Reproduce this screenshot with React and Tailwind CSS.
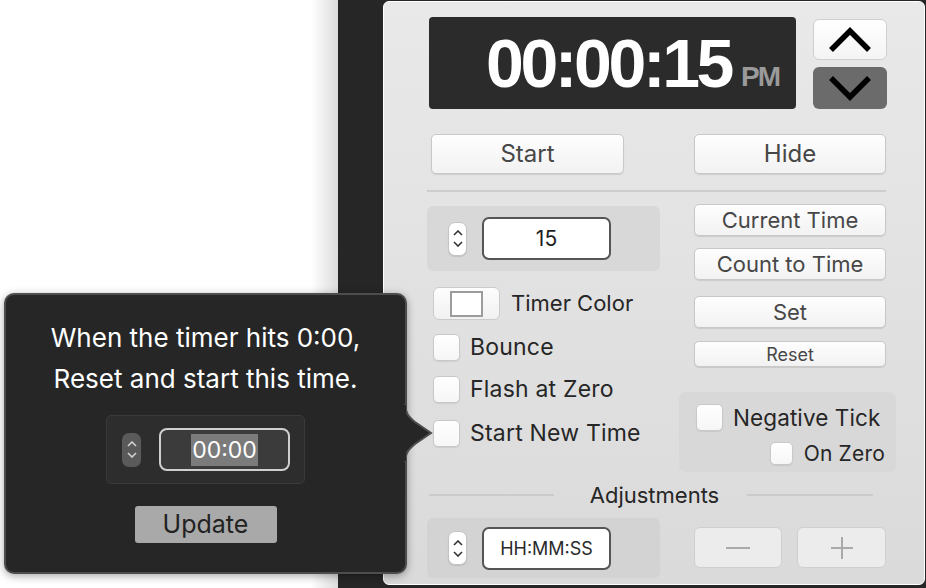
import React from "react";

const font = { fontFamily: "Inter, 'Noto Sans', sans-serif" };

function Btn({ className = "", children }) {
  return (
    <div
      className={`flex items-center justify-center rounded-[5px] border border-[#c8c8c8] bg-gradient-to-b from-[#fefefe] to-[#f2f2f2] text-[#474747] shadow-[0_1px_1px_rgba(0,0,0,0.10)] ${className}`}
    >
      {children}
    </div>
  );
}

function Check({ className = "" }) {
  return (
    <div
      className={`shrink-0 rounded-[5px] border border-[#c9c9c9] bg-gradient-to-b from-white to-[#f6f6f6] shadow-[0_1px_1px_rgba(0,0,0,0.08)] ${className}`}
    />
  );
}

function Stepper({ dark = false }) {
  const stroke = dark ? "#d0d0d0" : "#333";
  return (
    <div
      className={
        dark
          ? "flex h-[34px] w-[19px] flex-col items-center justify-center gap-[5px] rounded-[7px] bg-[#5a5a5a]"
          : "flex h-[34px] w-[19px] flex-col items-center justify-center gap-[5px] rounded-[7px] border border-[#c4c4c4] bg-white shadow-[0_1px_1px_rgba(0,0,0,0.1)]"
      }
    >
      <svg width="10" height="6" viewBox="0 0 10 6">
        <path d="M1 5 L5 1 L9 5" fill="none" stroke={stroke} strokeWidth="1.6" />
      </svg>
      <svg width="10" height="6" viewBox="0 0 10 6">
        <path d="M1 1 L5 5 L9 1" fill="none" stroke={stroke} strokeWidth="1.6" />
      </svg>
    </div>
  );
}

export default function App() {
  return (
    <div className="relative flex h-[588px] w-[926px] overflow-hidden bg-white" style={font}>
      {/* left desktop area */}
      <div className="h-full w-[338px] bg-gradient-to-r from-white from-[92%] to-[#dcdcdc]" />
      {/* dark window */}
      <div className="flex h-full flex-1 bg-[#262626] pb-[3px] pl-[45px] pr-[1px] pt-[1px]">
        <div className="flex h-full w-full flex-col rounded-[6px] border border-white bg-gradient-to-b from-[#e9e9e9] to-[#dadada] pl-[43px] pt-[15px]">
          {/* Row 1: display + arrows */}
          <div className="flex">
            <div className="ml-[2px] flex h-[92px] w-[367px] items-end justify-end rounded-[4px] bg-[#2b2b2b] pb-[12px] pr-[17px]">
              <span
                className="text-[68px] font-bold leading-none tracking-[-3.4px] text-white"
                style={{ fontFamily: "'Liberation Sans', Arial, sans-serif" }}
              >
                00:00:15
              </span>
              <span
                className="mb-[6px] ml-[10px] text-[28px] font-bold leading-none tracking-[-2px] text-[#9a9a9a]"
                style={{ fontFamily: "'Liberation Sans', Arial, sans-serif" }}
              >
                PM
              </span>
            </div>
            <div className="ml-[17px] flex flex-col gap-[7px] pt-[2px]">
              <div className="flex h-[41px] w-[74px] items-center justify-center rounded-[6px] border border-[#cfcfcf] bg-gradient-to-b from-white to-[#f4f4f4]">
                <svg width="46" height="28" viewBox="0 0 46 28">
                  <path d="M4 24 L23 5 L42 24" fill="none" stroke="#000" strokeWidth="5.5" />
                </svg>
              </div>
              <div className="flex h-[42px] w-[74px] items-center justify-center rounded-[6px] bg-[#6b6b6b]">
                <svg width="46" height="28" viewBox="0 0 46 28">
                  <path d="M4 4 L23 23 L42 4" fill="none" stroke="#000" strokeWidth="5.5" />
                </svg>
              </div>
            </div>
          </div>

          {/* Row 2: Start / Hide */}
          <div className="mt-[25px] flex">
            <Btn className="ml-[4px] h-[40px] w-[193px] text-[24px]">Start</Btn>
            <Btn className="ml-[70px] h-[40px] w-[192px] text-[24px]">Hide</Btn>
          </div>

          {/* separator */}
          <div className="mt-[16px] h-[2px] w-[459px] bg-[#cdcdcd]" />

          {/* middle section */}
          <div className="flex gap-[34px]">
            <div className="flex w-[233px] flex-col">
              <div className="mt-[14px] flex h-[65px] items-center rounded-[6px] bg-[#d8d8d8] pl-[21px]">
                <Stepper />
                <div className="ml-[15px] flex h-[43px] w-[129px] items-center justify-center rounded-[7px] border-2 border-[#555] bg-white text-[21px] text-[#1e1e1e]">
                  15
                </div>
              </div>
              <div className="mt-[16px] flex h-[33px] items-center">
                <div className="ml-[6px] flex h-[33px] w-[67px] items-center justify-center rounded-[6px] border border-[#cbcbcb] bg-gradient-to-b from-[#fdfdfd] to-[#f1f1f1]">
                  <div className="h-[26px] w-[33px] border-2 border-[#9c9c9c] bg-white" />
                </div>
                <span className="ml-[11px] text-[22px] text-[#262626]">Timer Color</span>
              </div>
              <div className="mt-[14px] flex h-[27px] items-center">
                <Check className="ml-[6px] h-[27px] w-[27px]" />
                <span className="ml-[10px] text-[23px] leading-[27px] tracking-[0.2px] text-[#262626]">Bounce</span>
              </div>
              <div className="mt-[15px] flex h-[27px] items-center">
                <Check className="ml-[6px] h-[27px] w-[27px]" />
                <span className="ml-[10px] text-[23px] leading-[27px] tracking-[0.2px] text-[#262626]">Flash at Zero</span>
              </div>
              <div className="mt-[17px] flex h-[27px] items-center">
                <Check className="ml-[6px] h-[27px] w-[27px]" />
                <span className="ml-[10px] text-[23px] leading-[27px] tracking-[0.2px] text-[#262626]">Start New Time</span>
              </div>
            </div>
            <div className="flex w-[192px] flex-col">
              <Btn className="mt-[12px] h-[32px] w-[192px] text-[22px]">Current Time</Btn>
              <Btn className="mt-[12px] h-[32px] w-[192px] text-[22px]">Count to Time</Btn>
              <Btn className="mt-[16px] h-[32px] w-[192px] text-[22px]">Set</Btn>
              <Btn className="mt-[13px] h-[26px] w-[192px] text-[18px]">Reset</Btn>
              <div className="-ml-[15px] mt-[25px] flex h-[80px] w-[217px] flex-col rounded-[7px] bg-[#d8d8d8] pl-[17px] pr-[11px] pt-[12px]">
                <div className="flex h-[27px] items-center whitespace-nowrap">
                  <Check className="h-[27px] w-[27px]" />
                  <span className="ml-[10px] text-[22.5px] leading-[27px] tracking-[0.1px] text-[#262626]">Negative Tick</span>
                </div>
                <div className="mt-[11px] flex h-[23px] items-center justify-end whitespace-nowrap">
                  <Check className="h-[23px] w-[23px]" />
                  <span className="ml-[11px] text-[21px] leading-[23px] tracking-[0.2px] text-[#262626]">On Zero</span>
                </div>
              </div>
            </div>
          </div>

          {/* Adjustments */}
          <div className="mt-[12px] flex h-[22px] w-[459px] items-center">
            <div className="ml-[2px] h-[2px] w-[125px] bg-[#cbcbcb]" />
            <div className="flex-1 pl-[8px] text-center text-[22px] text-[#262626]">Adjustments</div>
            <div className="mr-[13px] h-[2px] w-[126px] bg-[#cbcbcb]" />
          </div>

          {/* bottom row */}
          <div className="mt-[12px] flex">
            <div className="flex h-[60px] w-[233px] items-center rounded-[6px] bg-[#d3d3d3] pl-[21px]">
              <Stepper />
              <div className="ml-[15px] flex h-[43px] w-[129px] items-center justify-center rounded-[7px] border-2 border-[#555] bg-white text-[18px] text-[#2a2a2a]">
                HH:MM:SS
              </div>
            </div>
            <div className="ml-[34px] mt-[9px] flex h-[41px] w-[88px] items-center justify-center rounded-[6px] border border-[#cfcfcf] bg-[#ececec]">
              <div className="h-[2px] w-[24px] bg-[#aaa]" />
            </div>
            <div className="ml-[15px] mt-[9px] flex h-[41px] w-[89px] items-center justify-center rounded-[6px] border border-[#cfcfcf] bg-[#ececec]">
              <svg width="24" height="24" viewBox="0 0 24 24">
                <path d="M12 1 V23 M1 12 H23" stroke="#aaa" strokeWidth="2" />
              </svg>
            </div>
          </div>
        </div>
      </div>

      {/* Popover */}
      <div className="absolute left-[4px] top-[293px] flex h-[281px] w-[403px] flex-col items-center rounded-[10px] border-2 border-[#4d4d4d] bg-[#262626] shadow-[0_2px_8px_rgba(0,0,0,0.35)]">
        <div className="mt-[22px] text-center text-[26px] leading-[41px] text-white">
          <div>When the timer hits 0:00,</div>
          <div>Reset and start this time.</div>
        </div>
        <div className="mt-[16px] flex h-[69px] w-[199px] items-center rounded-[5px] border border-[#3a3a3a] bg-[#2d2d2d] pl-[15px]">
          <Stepper dark />
          <div className="ml-[18px] flex h-[43px] w-[131px] items-center justify-center rounded-[8px] border-2 border-[#cfcfcf] bg-[#3b3b3b]">
            <span className="bg-[#7b7b7b] px-[1px] text-[23px] leading-[32px] text-white">00:00</span>
          </div>
        </div>
        <div className="mt-[22px] flex h-[37px] w-[142px] items-center justify-center rounded-[3px] bg-[#a9a9a9] text-[25px] text-[#222]">
          Update
        </div>
      </div>
      {/* Popover arrow */}
      <svg className="absolute left-[403px] top-[404px]" width="32" height="58" viewBox="0 0 32 58">
        <path
          d="M2 0 C2 9 6 13 12 18 L28 29 L12 40 C6 45 2 49 2 58"
          fill="#262626"
          stroke="#4d4d4d"
          strokeWidth="2"
        />
        <rect x="0" y="1" width="3" height="56" fill="#262626" />
      </svg>
    </div>
  );
}
